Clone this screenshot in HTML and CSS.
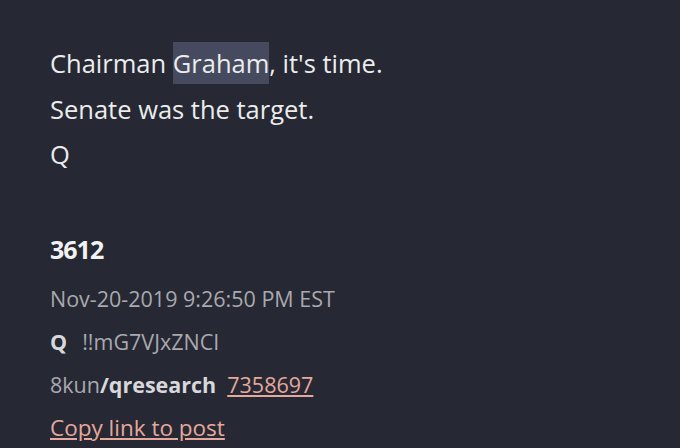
FILE: index.html
```html
<!DOCTYPE html>
<html lang="en">

<head>
    <meta charset="UTF-8">
    <title>Q drop 3612</title>
    <link rel="stylesheet" href="styles.css">
</head>

<body>
    <div class="post">
        <div class="message">
            <p>Chairman <span class="highlight">Graham</span>, it's time.</p>
            <p>Senate was the target.</p>
            <p>Q</p>
        </div>
        <div class="meta">
            <div class="number">3612</div>
            <div class="date">Nov-20-2019 9:26:50 PM EST</div>
            <div class="author"><b>Q</b>!!mG7VJxZNCI</div>
            <div class="board">8kun<b>/qresearch</b><a href="#">7358697</a></div>
            <div class="copy"><a href="#">Copy link to post</a></div>
        </div>
    </div>
</body>

</html>
```

FILE: styles.css
```css
body,
html {
    margin: 0;
    padding: 0;
    height: 100%;
    background: #262833;
    font-family: "Open Sans", Arial, sans-serif;
    overflow: hidden;
}

.post {
    padding: 41px 50px 0 50px;
}

.message p {
    margin: 0;
    font-size: 25.5px;
    line-height: 45.5px;
    color: #ececec;
}

.highlight {
    background: #464a5e;
    padding: 4px 0;
}

.meta {
    margin-top: 49px;
    color: #a9a9af;
    font-size: 21.5px;
}

.meta div {
    line-height: 43px;
}

.meta .number {
    color: #f2f2f2;
    font-weight: bold;
    font-size: 25px;
    letter-spacing: -1px;
    line-height: 44px;
    margin-bottom: 6px;
}

.author b {
    color: #d8d8dc;
    margin-right: 15px;
}

.board b {
    color: #d8d8dc;
    margin-right: 11px;
}

.copy {
    font-size: 22.5px;
}

a {
    color: #e5a89c;
    text-decoration: underline;
}
```
